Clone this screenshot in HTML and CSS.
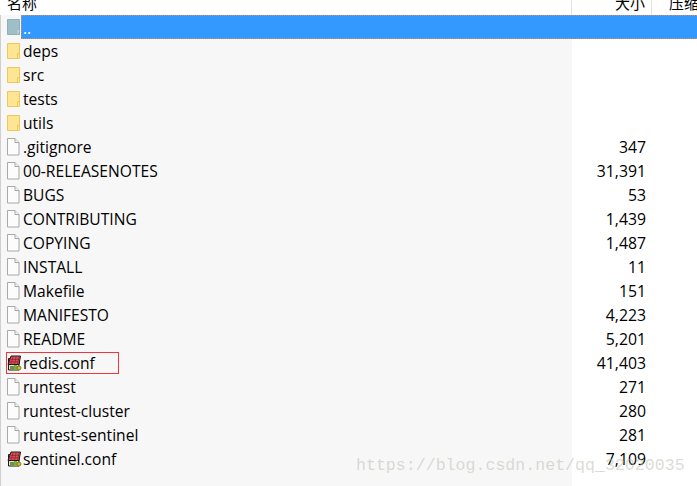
FILE: index.html
```html
<!DOCTYPE html>
<html lang="zh">
<head>
<meta charset="utf-8">
<title>文件列表</title>
<link rel="stylesheet" href="styles.css">
</head>
<body>
<svg class="defs" width="0" height="0" aria-hidden="true">
  <defs>
    <symbol id="i-up" viewBox="0 0 13 16"><path d="M.5.5h12v15H.5z" fill="#9fbfc8" stroke="#93aeb8"/><path d="M12.500 11.500h-2v4" fill="#c5d8dc" stroke="#b5c9ce"/></symbol>
    <symbol id="i-folder" viewBox="0 0 13 16"><path d="M.5.5h12v15H.5z" fill="#fde594" stroke="#eec95a"/><path d="M12.500 10.500h-2v5" fill="none" stroke="#eec95a"/></symbol>
    <symbol id="i-file" viewBox="0 0 13 18"><path d="M.5.5h7.500l4 4v12.500H.5z" fill="#fcfcfc" stroke="#a8a8a8"/><path d="M8 .5v4h4" fill="#efefef" stroke="#a8a8a8"/></symbol>
    <symbol id="i-conf" viewBox="0 0 15 16"><path d="M1.500 3.500h10.500v11.500H1.500z" fill="#e8e4c8" stroke="#1a1a1a"/><path d="M1 9.500l3-8.500h9.500l-1.500 8.500z" fill="#e0525c" stroke="#1a1a1a"/><path d="M3 7l8-.2M4 4.500l8.500-.2M6 2l-2 7M9 2l-1.500 7M12 2l-1.500 7" stroke="#8e2530" stroke-width=".8" fill="none"/><path d="M3 11h4v3H3z" fill="#6f8f60"/><path d="M7 10h3v1.500h1.500v1.500H13v2H7z" fill="#7fae2c"/><circle cx="12" cy="13" r="2" fill="#d9b81e" stroke="#5a6a20" stroke-width=".7"/></symbol>
  </defs>
</svg>
<main class="list">
  <header class="head">
    <div class="hcell hname"><span>名称</span></div>
    <div class="hcell hsize"><span>大小</span></div>
    <div class="hcell hpack"><span>压缩</span></div>
  </header>
  <div class="row up"><svg class="ic ic-dir"><use href="#i-up"/></svg><span class="sel">..</span></div>
  <div class="row"><span class="name"><svg class="ic ic-dir"><use href="#i-folder"/></svg><span class="label">deps</span></span><span class="size"></span></div>
  <div class="row"><span class="name"><svg class="ic ic-dir"><use href="#i-folder"/></svg><span class="label">src</span></span><span class="size"></span></div>
  <div class="row"><span class="name"><svg class="ic ic-dir"><use href="#i-folder"/></svg><span class="label">tests</span></span><span class="size"></span></div>
  <div class="row"><span class="name"><svg class="ic ic-dir"><use href="#i-folder"/></svg><span class="label">utils</span></span><span class="size"></span></div>
  <div class="row"><span class="name"><svg class="ic ic-file"><use href="#i-file"/></svg><span class="label">.gitignore</span></span><span class="size">347</span></div>
  <div class="row"><span class="name"><svg class="ic ic-file"><use href="#i-file"/></svg><span class="label">00-RELEASENOTES</span></span><span class="size">31,391</span></div>
  <div class="row"><span class="name"><svg class="ic ic-file"><use href="#i-file"/></svg><span class="label">BUGS</span></span><span class="size">53</span></div>
  <div class="row"><span class="name"><svg class="ic ic-file"><use href="#i-file"/></svg><span class="label">CONTRIBUTING</span></span><span class="size">1,439</span></div>
  <div class="row"><span class="name"><svg class="ic ic-file"><use href="#i-file"/></svg><span class="label">COPYING</span></span><span class="size">1,487</span></div>
  <div class="row"><span class="name"><svg class="ic ic-file"><use href="#i-file"/></svg><span class="label">INSTALL</span></span><span class="size">11</span></div>
  <div class="row"><span class="name"><svg class="ic ic-file"><use href="#i-file"/></svg><span class="label">Makefile</span></span><span class="size">151</span></div>
  <div class="row"><span class="name"><svg class="ic ic-file"><use href="#i-file"/></svg><span class="label">MANIFESTO</span></span><span class="size">4,223</span></div>
  <div class="row"><span class="name"><svg class="ic ic-file"><use href="#i-file"/></svg><span class="label">README</span></span><span class="size">5,201</span></div>
  <div class="row"><span class="name"><svg class="ic ic-conf"><use href="#i-conf"/></svg><span class="label">redis.conf</span><span class="mark"></span></span><span class="size">41,403</span></div>
  <div class="row"><span class="name"><svg class="ic ic-file"><use href="#i-file"/></svg><span class="label">runtest</span></span><span class="size">271</span></div>
  <div class="row"><span class="name"><svg class="ic ic-file"><use href="#i-file"/></svg><span class="label">runtest-cluster</span></span><span class="size">280</span></div>
  <div class="row"><span class="name"><svg class="ic ic-file"><use href="#i-file"/></svg><span class="label">runtest-sentinel</span></span><span class="size">281</span></div>
  <div class="row"><span class="name"><svg class="ic ic-conf"><use href="#i-conf"/></svg><span class="label">sentinel.conf</span></span><span class="size">7,109</span></div>
</main>
<div class="watermark">https://blog.csdn.net/qq_32020035</div>
</body>
</html>
```
FILE: styles.css
```css
* { box-sizing: border-box; }
html, body { margin: 0; height: 100%; }
body {
  position: relative;
  overflow: hidden;
  background: linear-gradient(to right, #cfcfcf 1px, #f7f7f7 1px, #f7f7f7 572px, #fff 572px);
  color: #000;
  font-family: "Open Sans", "Noto Sans CJK SC", sans-serif;
  font-size: 15.6px;
}
.defs { position: absolute; }
.list { display: flex; flex-direction: column; }
.head {
  display: grid;
  grid-template-columns: 572px 80px 1fr;
  height: 15px;
  background: #fff;
  overflow: hidden;
  font-family: "Noto Sans CJK SC", sans-serif;
  font-size: 15px;
  line-height: 15px;
}
.hcell { height: 15px; overflow: hidden; }
.hcell span { display: block; margin-top: -5px; }
.hname { padding-left: 7px; border-right: 1px solid #e3e3e3; }
.hsize { padding-right: 6px; text-align: right; border-right: 1px solid #e3e3e3; }
.hpack { padding-left: 17px; white-space: nowrap; }
.row {
  display: grid;
  grid-template-columns: 572px 74px;
  height: 24px;
  align-items: center;
  line-height: 24px;
}
.name { position: relative; display: flex; align-items: center; height: 24px; padding-left: 7px; }
.ic { flex: none; display: block; }
.ic-dir { width: 13px; height: 16px; margin-right: 3px; }
.ic-file { width: 13px; height: 18px; margin-right: 3px; }
.ic-conf { width: 15px; height: 16px; margin-right: 1px; }
.size { text-align: right; font-size: 15.8px; }
.up { display: flex; padding-left: 7px; }
.up .ic { margin-right: 1px; }
.sel {
  flex: 1;
  height: 24px;
  padding-left: 1px;
  background: #3399ff;
  color: #fff;
  border-top: 1px dotted #cf9055;
  border-bottom: 1px dotted #cf9055;
  border-left: 1px dotted #cf9055;
  line-height: 24px;
}
.label { white-space: nowrap; }
.mark {
  position: absolute;
  left: 6px;
  top: 1px;
  width: 113px;
  height: 22px;
  border: 1px solid #f0353b;
}
.watermark {
  position: absolute;
  left: 356px;
  top: 456px;
  font-family: "Liberation Mono", monospace;
  font-size: 16.6px;
  line-height: 20px;
  color: rgba(190, 190, 178, 0.55);
  white-space: nowrap;
}
```
